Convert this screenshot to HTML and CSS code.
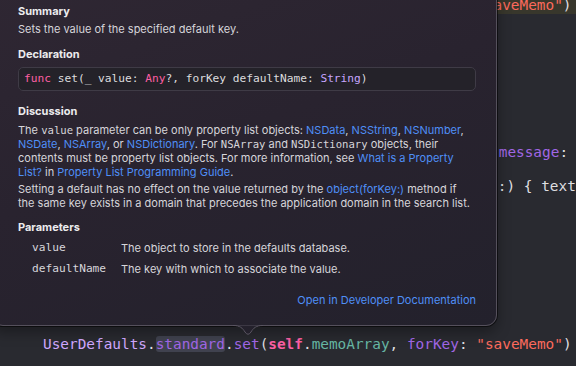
FILE: index.html
```html
<!DOCTYPE html>
<html>
<head>
<meta charset="utf-8">
<link rel="stylesheet" href="styles.css">
</head>
<body>
<div class="editor">
  <div class="line l1 current"><span class="str">"saveMemo"</span>)</div>
  <div class="line l2"><span class="prop">message</span>:</div>
  <div class="line l3">:) { textField</div>
  <div class="line l4"><span class="cls">UserDefaults</span>.<span class="prop sel">standard</span>.<span class="prop">set</span>(<span class="kw">self</span>.<span class="proj">memoArray</span>, <span class="prop">forKey</span>: <span class="str">"saveMemo"</span>)</div>
</div>

<div class="popover">
  <h3 class="h h-first">Summary</h3>
  <p class="p p-summary">Sets the value of the specified default key.</p>
  <h3 class="h h-decl">Declaration</h3>
  <div class="decl"><span class="kw2">func</span> set(_ value: <span class="kw2">Any</span>?, forKey defaultName: <span class="type">String</span>)</div>
  <h3 class="h h-disc">Discussion</h3>
  <p class="p p-disc1">The <code class="c">value</code> parameter can be only property list objects: <a class="a">NSData</a>, <a class="a">NSString</a>, <a class="a">NSNumber</a>, <a class="a">NSDate</a>, <a class="a">NSArray</a>, or <a class="a">NSDictionary</a>. For <code class="c">NSArray</code> and <code class="c">NSDictionary</code> objects, their contents must be property list objects. For more information, see <a class="a">What is a Property List?</a> in <a class="a">Property List Programming Guide</a>.</p>
  <p class="p p-disc2">Setting a default has no effect on the value returned by the <a class="a">object(forKey:)</a> method if the same key exists in a domain that precedes the application domain in the search list.</p>
  <h3 class="h h-params">Parameters</h3>
  <div class="params">
    <code class="pname">value</code><span class="pdesc">The object to store in the defaults database.</span>
    <code class="pname">defaultName</code><span class="pdesc">The key with which to associate the value.</span>
  </div>
  <div class="more"><a class="a">Open in Developer Documentation</a></div>
  <svg class="arrow" width="30" height="13" viewBox="0 0 30 13"><path d="M0 0.5 C7 0.5 9.5 3 12 7 Q15 11.5 18 7 C20.5 3 23 0.5 30 0.5" fill="#24212c" stroke="#5a5562" stroke-width="1"/></svg>
</div>
</body>
</html>
```

FILE: styles.css
```css
html, body {
  margin: 0;
  padding: 0;
}
body {
  width: 576px;
  height: 366px;
  overflow: hidden;
  background: #292a30;
  position: relative;
  font-family: Inter, "Noto Sans", sans-serif;
}
.editor {
  display: flex;
  flex-direction: column;
  font-family: "DejaVu Sans Mono", monospace;
  font-size: 14.4px;
  color: #dfdfe0;
  white-space: pre;
  overflow: hidden;
}
.line {
  height: 18px;
  line-height: 18px;
  padding-left: 43px;
}
.l1 { margin-top: -4px; padding-left: calc(43px + 50ch); }
.l2 { margin-top: 129px; padding-left: calc(43px + 52.6ch); }
.l3 { margin-top: 16px; padding-left: calc(43px + 52.5ch); }
.l4 { margin-top: 140px; }
.current { background: #38372c; }
.cls { color: #d0a8ff; }
.prop { color: #a167e6; }
.kw { color: #fc5fa3; font-weight: bold; }
.proj { color: #67b7a4; }
.str { color: #fc6a5d; }
.sel {
  background: #40424f;
  border-radius: 3px;
}

.popover {
  position: absolute;
  left: -8px;
  top: -20px;
  width: 505px;
  height: 346px;
  box-sizing: border-box;
  padding: 23px 20px 0 25px;
  border: 1px solid #55505c;
  border-radius: 11px;
  background: linear-gradient(160deg, #2f2733 0%, #29232f 45%, #23212c 100%);
  box-shadow: 0 0 0 1px rgba(0,0,0,0.55), 0 6px 14px rgba(0,0,0,0.35);
  color: #d6d5da;
  font-size: 11px;
  line-height: 14px;
}
.h {
  margin: 0;
  font-size: 11px;
  font-weight: 700;
  color: #ececee;
}
.p { margin: 0; }
.p-summary { margin-top: 4px; }
.h-decl { margin-top: 11px; }
.decl {
  margin-top: 6px;
  height: 24px;
  box-sizing: border-box;
  border: 1px solid #3f3b46;
  border-radius: 5px;
  background: #242229;
  padding-left: 5px;
  line-height: 22px;
  font-family: "DejaVu Sans Mono", monospace;
  font-size: 11.2px;
  color: #dcdcde;
  white-space: pre;
}
.kw2 { color: #fc5fa3; }
.type { color: #c7a6ff; }
.h-disc { margin-top: 13px; }
.p-disc1 { margin-top: 5px; }
.p-disc2 { margin-top: 3px; }
.c {
  font-family: "DejaVu Sans Mono", monospace;
  font-size: 10.6px;
  line-height: 10px;
}
.a { color: #4f8ff7; }
.h-params { margin-top: 10px; }
.params {
  margin-top: 7px;
  display: grid;
  grid-template-columns: 89px 1fr;
  row-gap: 7px;
  padding-left: 14px;
}
.pname {
  font-family: "DejaVu Sans Mono", monospace;
  font-size: 11.2px;
  line-height: 14px;
}
.more {
  margin-top: 17px;
  text-align: right;
}
.arrow {
  position: absolute;
  left: 240px;
  bottom: -13px;
}
```
